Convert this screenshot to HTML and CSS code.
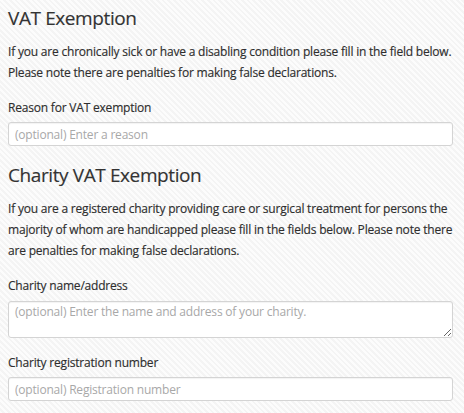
FILE: index.html
```html
<!DOCTYPE html>
<html lang="en">
<head>
<meta charset="utf-8">
<title>VAT Exemption</title>
<link rel="stylesheet" href="styles.css">
</head>
<body>
<main class="page">
  <section class="section">
    <h2 class="title">VAT Exemption</h2>
    <p class="intro">If you are chronically sick or have a disabling condition please fill in the field below. Please note there are penalties for making false declarations.</p>
    <div class="field">
      <label class="label" for="reason">Reason for VAT exemption</label>
      <input class="input" id="reason" type="text" placeholder="(optional) Enter a reason">
    </div>
  </section>
  <section class="section">
    <h2 class="title">Charity VAT Exemption</h2>
    <p class="intro">If you are a registered charity providing care or surgical treatment for persons the majority of whom are handicapped please fill in the fields below. Please note there are penalties for making false declarations.</p>
    <div class="field">
      <label class="label" for="charity">Charity name/address</label>
      <textarea class="input textarea" id="charity" placeholder="(optional) Enter the name and address of your charity."></textarea>
    </div>
    <div class="field">
      <label class="label" for="regno">Charity registration number</label>
      <input class="input" id="regno" type="text" placeholder="(optional) Registration number">
    </div>
  </section>
</main>
</body>
</html>
```

FILE: styles.css
```css
html, body {
  margin: 0;
  padding: 0;
}
body {
  width: 464px;
  height: 413px;
  overflow: hidden;
  font-family: "Open Sans", "Noto Sans", sans-serif;
  font-size: 12px;
  letter-spacing: -0.2px;
  color: #2e2e2e;
  -webkit-text-stroke: 0.15px currentColor;
  background-color: #fafafa;
  background-image: repeating-linear-gradient(45deg, #fcfcfc 0px, #fcfcfc 2px, #f4f4f4 2px, #f4f4f4 4px);
}
.page {
  padding: 4px 11px 0 8px;
}
.section {
  display: flex;
  flex-direction: column;
}
.title {
  margin: 0;
  font-size: 19px;
  font-weight: 400;
  letter-spacing: -0.4px;
  line-height: 28px;
  color: #333;
}
.intro {
  margin: 10px -6px 0 0;
  line-height: 20.8px;
}
.field {
  display: flex;
  flex-direction: column;
  margin-top: 14px;
  margin-bottom: 15px;
}
.field + .field {
  margin-top: 0;
}
.label {
  line-height: 20.8px;
  margin-bottom: 4px;
}
.input {
  box-sizing: border-box;
  height: 24px;
  margin: 0;
  padding: 0 6px;
  border: 1px solid #d4d4d4;
  border-radius: 3px;
  background: #fff;
  box-shadow: inset 0 1px 1px rgba(0,0,0,0.05);
  font-family: "Open Sans", "Noto Sans", sans-serif;
  font-size: 12px;
  letter-spacing: -0.2px;
  color: #333;
  -webkit-text-stroke: 0;
}
.input::placeholder {
  color: #a8a8a8;
}
.textarea {
  height: 37px;
  padding: 2px 6px;
  line-height: 16px;
  resize: vertical;
}
```
